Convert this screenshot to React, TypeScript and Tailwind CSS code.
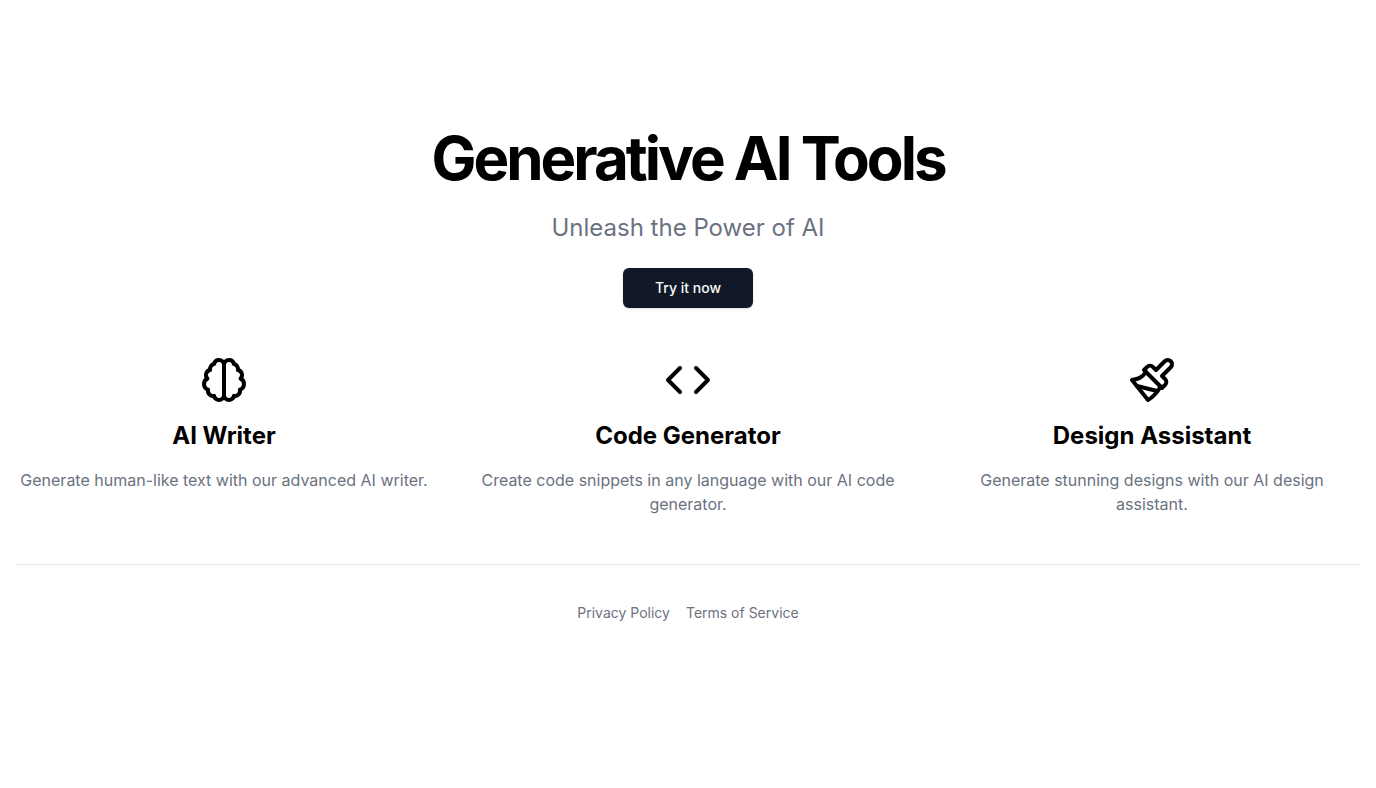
import React from "react";

type Feature = { title: string; text: string; paths: string[] };

const features: Feature[] = [
  {
    title: "AI Writer",
    text: "Generate human-like text with our advanced AI writer.",
    paths: [
      "M9.5 2A2.5 2.5 0 0 1 12 4.5v15a2.5 2.5 0 0 1-4.96.44 2.5 2.5 0 0 1-2.96-3.08 3 3 0 0 1-.34-5.58 2.5 2.5 0 0 1 1.32-4.24 2.5 2.5 0 0 1 1.98-3A2.5 2.5 0 0 1 9.5 2Z",
      "M14.5 2A2.5 2.5 0 0 0 12 4.5v15a2.5 2.5 0 0 0 4.96.44 2.5 2.5 0 0 0 2.96-3.08 3 3 0 0 0 .34-5.58 2.5 2.5 0 0 0-1.32-4.24 2.5 2.5 0 0 0-1.98-3A2.5 2.5 0 0 0 14.5 2Z",
    ],
  },
  {
    title: "Code Generator",
    text: "Create code snippets in any language with our AI code generator.",
    paths: ["m16 18 6-6-6-6", "m8 6-6 6 6 6"],
  },
  {
    title: "Design Assistant",
    text: "Generate stunning designs with our AI design assistant.",
    paths: [
      "M18.37 2.63 14 7l-1.59-1.59a2 2 0 0 0-2.82 0L8 7l9 9 1.59-1.59a2 2 0 0 0 0-2.82L17 10l4.37-4.37a2.12 2.12 0 1 0-3-3Z",
      "M9 8c-2 3-4 3.5-7 4l8 10c2-1 6-5 6-7",
      "M14.5 17.5 4.5 15",
    ],
  },
];

export default function App() {
  return (
    <div className="min-h-screen bg-white px-4 font-['Inter',sans-serif] text-black">
      <main className="flex flex-col items-center pt-32 text-center">
        <h1 className="text-6xl font-bold tracking-tighter">Generative AI Tools</h1>
        <p className="mt-6 text-2xl text-[#6b7280]">Unleash the Power of AI</p>
        <button
          type="button"
          className="mt-6 h-10 rounded-md bg-[#111827] px-8 text-sm font-medium text-gray-50 shadow-sm"
        >
          Try it now
        </button>
        <section className="mt-12 grid w-full grid-cols-3 gap-12">
          {features.map((feature) => (
            <article key={feature.title} className="flex flex-col items-center">
              <svg
                className="size-12"
                viewBox="0 0 24 24"
                fill="none"
                stroke="currentColor"
                strokeWidth="2"
                strokeLinecap="round"
                strokeLinejoin="round"
                aria-hidden="true"
              >
                {feature.paths.map((d) => (
                  <path key={d} d={d} />
                ))}
              </svg>
              <h2 className="mt-4 text-2xl font-bold">{feature.title}</h2>
              <p className="mt-4 text-base text-[#6b7280]">{feature.text}</p>
            </article>
          ))}
        </section>
      </main>
      <footer className="mt-12 border-t border-gray-200 pt-9">
        <nav className="flex justify-center gap-4 text-sm leading-6 text-[#6b7280]">
          <a href="#privacy">Privacy Policy</a>
          <a href="#terms">Terms of Service</a>
        </nav>
      </footer>
    </div>
  );
}
